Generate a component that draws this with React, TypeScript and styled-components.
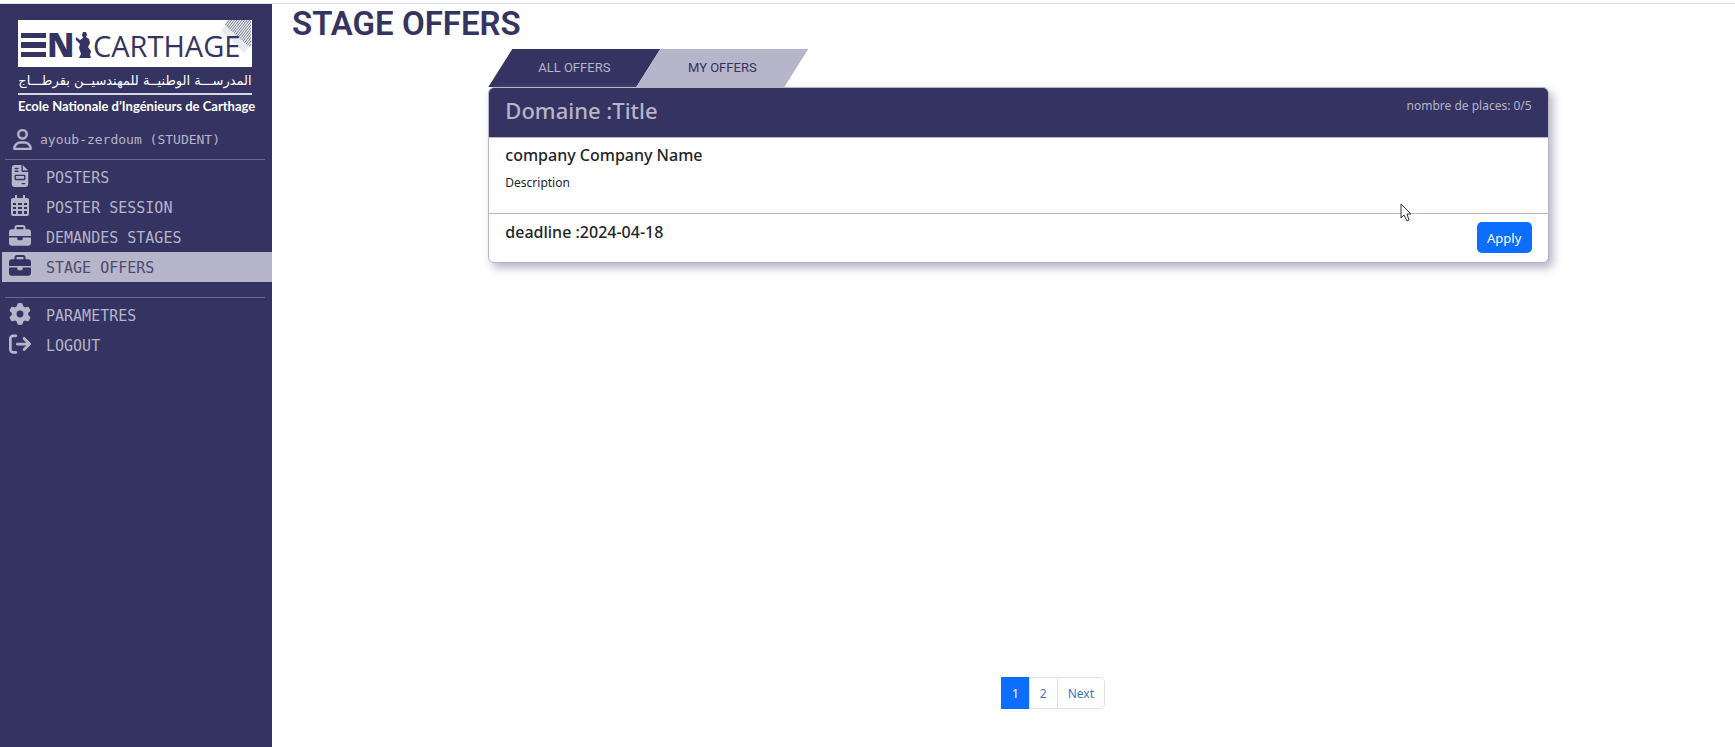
import React from "react";
import styled, { createGlobalStyle } from "styled-components";
import {
  FaArrowRightFromBracket,
  FaBriefcase,
  FaFileInvoice,
  FaGear,
  FaRegUser,
} from "react-icons/fa6";

const navy = "#343361";
const lilac = "#b6b5c9";
const blue = "#0d6efd";
const sans = '"Noto Sans", "Open Sans", sans-serif';

const GlobalStyle = createGlobalStyle`
  * { box-sizing: border-box; }
  body { margin: 0; background: #fefefe; font-family: ${sans}; color: #212529; }
  h1, h2, h3, p, ul { margin: 0; padding: 0; }
  ul { list-style: none; }
`;

const Page = styled.div`
  display: flow-root;
`;

const Columns = styled.div`
  display: flex;
  min-height: calc(100vh - 3px);
  margin-top: 3px;
  border-top: 1px solid #dcdce4;
`;

const Sidebar = styled.aside`
  flex: 0 0 272px;
  padding: 16px 0 0 2px;
  background: ${navy};
  color: ${lilac};
  font-family: "DejaVu Sans Mono", monospace;
`;

const Brand = styled.div`
  width: 234px;
  margin-left: 16px;
  color: #fff;
`;

const LogoArt = styled.svg`
  display: block;
  width: 100%;
  height: 47px;
`;

const ArabicName = styled.p`
  height: 26px;
  font: 13px/28px "DejaVu Sans", sans-serif;
  white-space: nowrap;
  text-align: center;
`;

const FrenchName = styled.p`
  padding-top: 2px;
  border-top: 2px solid #d8d8e4;
  font: 700 13px/18px Lato, sans-serif;
  white-space: nowrap;
  text-align: center;
`;

const UserRow = styled.div`
  display: flex;
  align-items: center;
  gap: 7px;
  height: 44px;
  padding: 4px 0 0 10px;
  font-size: 13px;
  svg { stroke: currentColor; stroke-width: 12px; }
`;

const Divider = styled.hr`
  height: 1px;
  margin: 0 7px 2px 3px;
  border: 0;
  background: #6a698e;
`;

const MenuList = styled.ul`
  padding-bottom: 15px;
`;

const MenuLink = styled.a<{ $active?: boolean }>`
  display: flex;
  align-items: center;
  gap: 15px;
  height: 30px;
  padding: 2px 0 0 7px;
  background: ${(p) => (p.$active ? lilac : "transparent")};
  color: ${(p) => (p.$active ? "#4d4b6c" : lilac)};
  font-size: 15px;
  text-decoration: none;
  svg { width: 22px; height: 22px; margin-bottom: 4px; color: ${(p) => (p.$active ? navy : lilac)}; }
`;

const Main = styled.main`
  flex: 1;
  min-width: 0;
  padding-left: 20px;
`;

const Title = styled.h1`
  color: ${navy};
  font: 600 33px/40px Roboto, sans-serif;
`;

const OffersArea = styled.div`
  padding-left: 10px;
`;

const Offers = styled.section`
  width: 74%;
  min-height: 622px;
  margin: 5px auto 0;
`;

const Tabs = styled.div`
  display: flex;
`;

const Tab = styled.button<{ $active?: boolean }>`
  width: 172px;
  height: 38px;
  margin-right: -24px;
  padding: 0 0 2px;
  border: 0;
  clip-path: polygon(24px 0, 100% 0, calc(100% - 24px) 100%, 0 100%);
  background: ${(p) => (p.$active ? navy : lilac)};
  color: ${(p) => (p.$active ? lilac : navy)};
  font: 13px Roboto, sans-serif;
`;

const Card = styled.article`
  position: relative;
  border: 1px solid ${lilac};
  border-radius: 6px;
  background: #fff;
  box-shadow: 4px 5px 8px #b6b5c9;
`;

const CardHeader = styled.header`
  display: flex;
  justify-content: space-between;
  height: 50px;
  padding: 7px 16px;
  border-bottom: 1px solid ${lilac};
  border-radius: 5px 5px 0 0;
  background: ${navy};
  color: ${lilac};
`;

const CardTitle = styled.h2`
  font: 500 22px/30px ${sans};
`;

const Places = styled.span`
  font-size: 12px;
  line-height: 22px;
`;

const CardBody = styled.div`
  height: 75px;
  padding: 7px 16px;
  font-size: 12px;
  line-height: 20px;
`;

const CardHeading = styled.h3`
  margin-bottom: 8px;
  font: 500 16px/20px ${sans};
`;

const CardFooter = styled.footer`
  display: flex;
  justify-content: space-between;
  height: 49px;
  padding: 8px 16px;
  border-top: 1px solid ${lilac};
`;

const ApplyButton = styled.button`
  width: 55px;
  height: 31px;
  border: 0;
  border-radius: 5px;
  background: ${blue};
  color: #fff;
  font: 13px ${sans};
`;

const Pointer = styled.svg`
  position: absolute;
  top: 115px;
  right: 136px;
  width: 12px;
  height: 19px;
`;

const Pagination = styled.nav`
  display: flex;
  justify-content: center;
  padding: 6px 0 32px 80px;
`;

const PageButton = styled.button<{ $active?: boolean }>`
  height: 32px;
  padding: 0 10px;
  border: 1px solid ${(p) => (p.$active ? blue : "#dee2e6")};
  margin-left: -1px;
  background: ${(p) => (p.$active ? blue : "#fff")};
  color: ${(p) => (p.$active ? "#fff" : "#3e72d0")};
  font: 12px ${sans};
  &:last-child { border-radius: 0 5px 5px 0; }
`;

const Logo = () => (
  <Brand>
    <LogoArt viewBox="0 0 234 47" role="img" aria-label="ENICarthage">
      <defs>
        <pattern id="hatch" width="2" height="2" patternUnits="userSpaceOnUse" patternTransform="rotate(38)">
          <path d="M0 0H1V2H0Z" fill="#82819a" />
        </pattern>
      </defs>
      <path fill="#fff" d="M0 0H234V47H0Z" />
      <path d="M203 10 209 4 231 27 226 33Z" fill="#e9e9ef" />
      <path d="M209 0H233V27L230 26 207 5Z" fill="url(#hatch)" />
      <path fill={navy} d="M3 13H28V18H3ZM3 22H28V28H3ZM3 32H28V37H3Z" />
      <path fill={navy} d="M65 12 68 12 69 15 68 17 71 19 72 23 70 27 73 31 72 35 73 38H61L63 34 61 28 62 24 58 20 58 17 62 20 65 18 64 15Z" />
      <text x="29" y="37" fill={navy} fontFamily="Open Sans" fontWeight="800" fontSize="33">N</text>
      <text x="75" y="37" fill={navy} fontFamily="Open Sans" fontSize="29">CARTHAGE</text>
    </LogoArt>
    <ArabicName lang="ar" dir="rtl">المدرســـة الوطنيــة للمهندسيــن بقرطـــاج</ArabicName>
    <FrenchName lang="fr">Ecole Nationale d’Ingénieurs de Carthage</FrenchName>
  </Brand>
);

const CalendarIcon = () => (
  <svg viewBox="0 0 22 22" aria-hidden="true">
    <path
      fill="currentColor"
      fillRule="evenodd"
      d="M6 0H8V3H14V0H16V3H18Q20 3 20 5V19Q20 21 18 21H4Q2 21 2 19V5Q2 3 4 3H6ZM4 8V10H7V8ZM9 8V10H13V8ZM15 8V10H18V8ZM4 12V14H7V12ZM9 12V14H13V12ZM15 12V14H18V12ZM4 16V19H7V16ZM9 16V19H13V16ZM15 16V19H18V16Z"
    />
  </svg>
);

const mainLinks = [
  { label: "POSTERS", Icon: FaFileInvoice },
  { label: "POSTER SESSION", Icon: CalendarIcon },
  { label: "DEMANDES STAGES", Icon: FaBriefcase },
  { label: "STAGE OFFERS", Icon: FaBriefcase, active: true },
];

const accountLinks = [
  { label: "PARAMETRES", Icon: FaGear },
  { label: "LOGOUT", Icon: FaArrowRightFromBracket },
];

const Menu = ({ links }: { links: { label: string; Icon: React.ElementType; active?: boolean }[] }) => (
  <MenuList>
    {links.map(({ label, Icon, active }) => (
      <li key={label}>
        <MenuLink href="#" $active={active}>
          <Icon />
          {label}
        </MenuLink>
      </li>
    ))}
  </MenuList>
);

export default function App() {
  return (
    <>
      <GlobalStyle />
      <Page>
        <Columns>
          <Sidebar>
            <Logo />
            <UserRow>
              <FaRegUser size={21} />
              ayoub-zerdoum (STUDENT)
            </UserRow>
            <nav>
              <Divider />
              <Menu links={mainLinks} />
              <Divider />
              <Menu links={accountLinks} />
            </nav>
          </Sidebar>
          <Main>
            <Title>STAGE OFFERS</Title>
            <OffersArea>
              <Offers>
                <Tabs>
                  <Tab $active>ALL OFFERS</Tab>
                  <Tab>MY OFFERS</Tab>
                </Tabs>
                <Card>
                  <CardHeader>
                    <CardTitle>Domaine :Title</CardTitle>
                    <Places>nombre de places: 0/5</Places>
                  </CardHeader>
                  <CardBody>
                    <CardHeading>company Company Name</CardHeading>
                    <p>Description</p>
                  </CardBody>
                  <CardFooter>
                    <CardHeading>deadline :2024-04-18</CardHeading>
                    <ApplyButton>Apply</ApplyButton>
                  </CardFooter>
                  <Pointer viewBox="0 0 12 19" aria-hidden="true">
                    <path d="M1 1V15L4 12L7 18L9 17L7 11H11Z" fill="#fff" stroke="#333" />
                  </Pointer>
                </Card>
              </Offers>
            </OffersArea>
            <Pagination aria-label="Pages">
              <PageButton $active>1</PageButton>
              <PageButton>2</PageButton>
              <PageButton>Next</PageButton>
            </Pagination>
          </Main>
        </Columns>
      </Page>
    </>
  );
}
